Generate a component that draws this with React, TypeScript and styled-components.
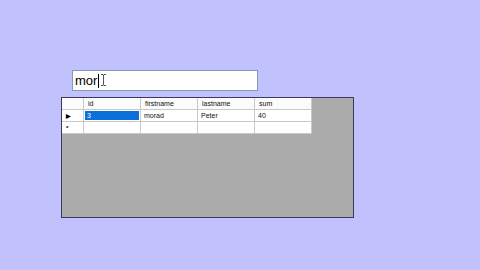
import styled, { createGlobalStyle } from "styled-components";

const Global = createGlobalStyle`
	html, body {
		margin: 0;
		padding: 0;
		background: #c1c1fd;
		width: 480px;
		height: 270px;
		overflow: hidden;
	}
`;

const Page = styled.div`
	display: flex;
	flex-direction: column;
	align-items: flex-start;
	padding: 70px 0 0 61px;
	font-family: "Liberation Sans", Arial, sans-serif;
`;

const TextBox = styled.div`
	position: relative;
	box-sizing: border-box;
	margin-left: 11px;
	width: 186px;
	height: 21px;
	background: #ffffff;
	border: 1px solid #7f9db9;
	display: flex;
	align-items: center;
	padding-left: 2px;
	font-size: 13px;
	color: #000;
`;

const Caret = styled.span`
	display: inline-block;
	width: 1px;
	height: 14px;
	background: #000;
	margin-left: 1px;
`;

const IBeam = styled.svg`
	position: absolute;
	left: 28px;
	top: 3px;
`;

const Grid = styled.div`
	box-sizing: border-box;
	margin-top: 6px;
	width: 293px;
	height: 121px;
	background: #ababab;
	border: 1px solid #3a3a5a;
`;

const Table = styled.div`
	display: grid;
	grid-template-columns: 22px repeat(4, 57px);
	grid-auto-rows: 12px;
	width: 250px;
	font-size: 7px;
	color: #111;
`;

interface CellProps {
	$selected?: boolean;
}

const Cell = styled.div<CellProps>`
	box-sizing: border-box;
	background: #fff;
	border-right: 1px solid #c9c9c9;
	border-bottom: 1px solid #c9c9c9;
	display: flex;
	align-items: center;
	padding-left: 3px;
	white-space: nowrap;
	overflow: hidden;
	${(p) =>
		p.$selected &&
		`
		background: #0a6fd8;
		color: #fff;
		box-shadow: inset 0 0 0 1px #fff;
	`}
`;

const HeaderCell = styled(Cell)`
	background: #fbfbfb;
	padding-left: 4px;
`;

const RowHeader = styled(Cell)`
	padding-left: 4px;
	font-size: 6px;
	font-weight: bold;
	color: #000;
`;

const columns = ["id", "firstname", "lastname", "sum"];
const rows = [["3", "morad", "Peter", "40"]];

export default function App() {
	return (
		<>
			<Global />
			<Page>
				<TextBox>
					mor
					<Caret />
					<IBeam width="5" height="12" viewBox="0 0 5 12">
						<path
							d="M0 0.5h2l0.5 0.5 0.5-0.5h2M2.5 1v10M0 11.5h2l0.5-0.5 0.5 0.5h2"
							stroke="#555"
							strokeWidth="1"
							fill="none"
						/>
					</IBeam>
				</TextBox>
				<Grid>
					<Table>
						<HeaderCell />
						{columns.map((c) => (
							<HeaderCell key={c}>{c}</HeaderCell>
						))}
						{rows.map((r, i) => [
							<RowHeader key={"h" + i}>▶</RowHeader>,
							...r.map((v, j) => (
								<Cell key={i + "-" + j} $selected={j === 0}>
									{v}
								</Cell>
							)),
						])}
						<RowHeader>*</RowHeader>
						{columns.map((c) => (
							<Cell key={"n" + c} />
						))}
					</Table>
				</Grid>
			</Page>
		</>
	);
}
